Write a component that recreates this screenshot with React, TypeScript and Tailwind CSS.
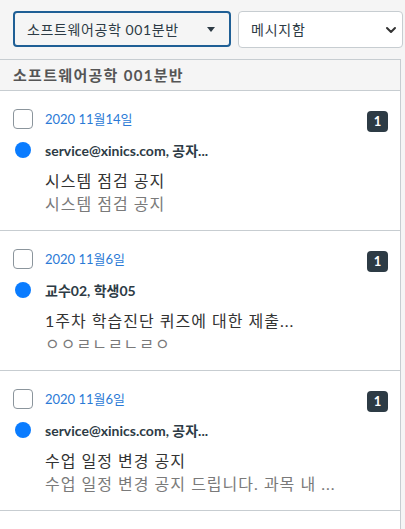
import { ChevronDown } from "lucide-react";

const messages = [
  {
    id: 1,
    date: "2020 11월14일",
    sender: "service@xinics.com, 공자...",
    subject: "시스템 점검 공지",
    preview: "시스템 점검 공지",
    count: 1,
  },
  {
    id: 2,
    date: "2020 11월6일",
    sender: "교수02, 학생05",
    subject: "1주차 학습진단 퀴즈에 대한 제출...",
    preview: "ㅇㅇㄹㄴㄹㄴㄹㅇ",
    count: 1,
  },
  {
    id: 3,
    date: "2020 11월6일",
    sender: "service@xinics.com, 공자...",
    subject: "수업 일정 변경 공지",
    preview: "수업 일정 변경 공지 드립니다. 과목 내 ...",
    count: 1,
  },
];

function MessageRow({ item }: { item: (typeof messages)[number] }) {
  return (
    <div className="h-[140px] border-b border-[#c7cdd1] pl-[13px] pr-[12px] pt-[18px]">
      <div className="flex items-start">
        <div className="h-5 w-5 shrink-0 rounded-[4px] border border-[#8b959c] bg-white" />
        <span className="ml-[12px] text-[13px] leading-[20px] text-[#2b7ad6]">{item.date}</span>
        <span className="ml-auto mt-[2px] flex h-[21px] w-[21px] items-center justify-center rounded-[4px] bg-[#2d3b45] text-[13px] font-bold text-white">
          {item.count}
        </span>
      </div>
      <div className="mt-[8px] flex h-5 items-center">
        <span className="ml-[2px] h-4 w-4 shrink-0 rounded-full bg-[#0a7cff]" />
        <span className="ml-[14px] text-[14px] font-bold text-[#2d3b45]">{item.sender}</span>
      </div>
      <div className="mt-[9px] pl-[32px] text-[16px] leading-[23px] tracking-[1px] text-[#333]">
        {item.subject}
      </div>
      <div className="pl-[32px] text-[16px] leading-[23px] tracking-[1px] text-[#7a7a7a]">{item.preview}</div>
    </div>
  );
}

export default function App() {
  return (
    <div
      className="h-[529px] w-[405px] overflow-hidden bg-[#f5f5f5]"
      style={{ fontFamily: "Lato, 'Noto Sans CJK KR', sans-serif" }}
    >
      <div className="flex h-[59px] gap-[7px] pl-[13px] pr-[2px] pt-[11px]">
        <div className="flex h-[36px] w-[218px] items-center rounded-[4px] border-2 border-[#1f5f95] bg-[#f5f5f5] pl-[12px] pr-[12px] text-[14px] tracking-[0.6px] text-[#2d3b45]">
          <span>소프트웨어공학 001분반</span>
          <span className="ml-auto mr-[2px] h-0 w-0 border-x-[4px] border-t-[5px] border-x-transparent border-t-[#2d3b45]" />
        </div>
        <div className="flex h-[37px] flex-1 items-center rounded-[4px] border border-[#c7cdd1] bg-white pl-[12px] pr-[3px] text-[14px] tracking-[0.8px] text-[#2d3b45]">
          <span>메시지함</span>
          <ChevronDown className="ml-auto h-4 w-4 text-[#333]" strokeWidth={3} />
        </div>
      </div>
      <div className="mr-[4px] border-r border-t border-[#c7cdd1] bg-white">
        <div className="flex h-[31px] items-center border-b border-[#c7cdd1] bg-[#f5f5f5] pl-[13px] text-[15px] font-bold tracking-[1.3px] text-[#555]">
          소프트웨어공학 001분반
        </div>
        {messages.map((m) => (
          <MessageRow key={m.id} item={m} />
        ))}
        <div className="h-[40px]" />
      </div>
    </div>
  );
}
